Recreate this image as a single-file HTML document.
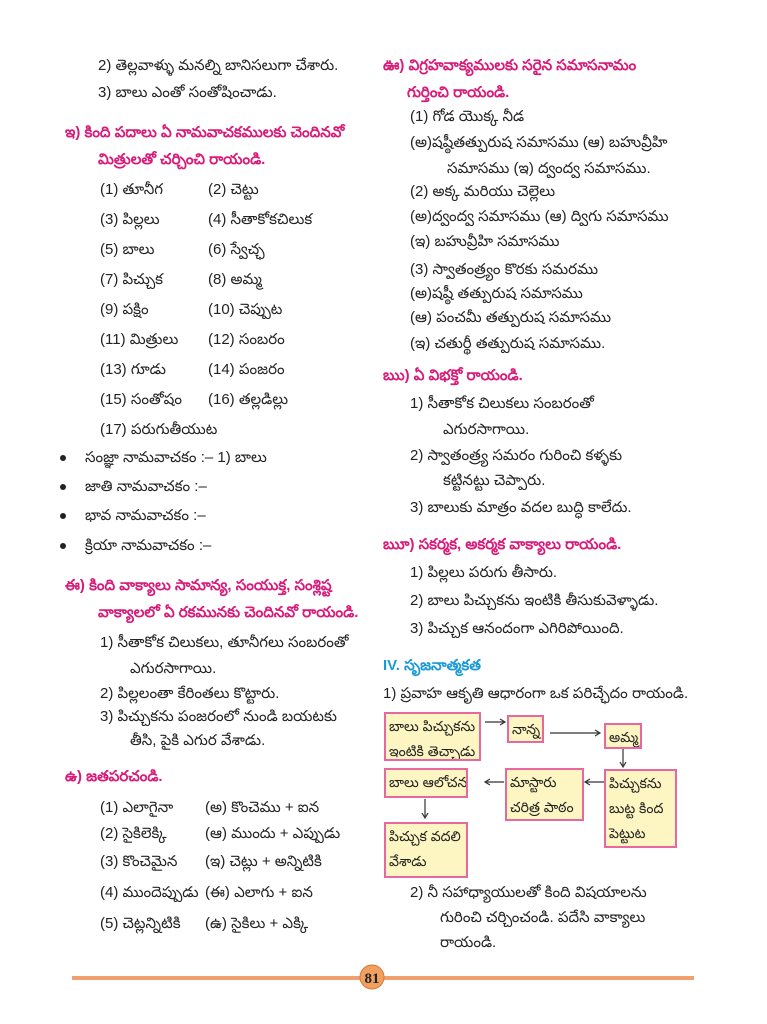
<!DOCTYPE html><html><head><meta charset="utf-8"><style>
body{margin:0;width:767px;height:1024px;background:#fff;position:relative;font-family:"Liberation Sans","Noto Sans CJK JP",sans-serif;font-size:15px;color:#222;overflow:hidden}
.t{position:absolute;white-space:nowrap;line-height:20px}
.p{color:#d81b7a;font-weight:bold}
.b{color:#1a9ad6;font-weight:bold}
.box{position:absolute;background:#fdf5c2;border:2px solid #e8679f;box-sizing:border-box;font-size:14px;line-height:25px;padding:0 3px;white-space:nowrap;overflow:hidden}
.dot{position:absolute;width:6px;height:6px;border-radius:50%;background:#222}
</style></head><body>
<div class="t" style="left:98px;top:56px">2) తెల్లవాళ్ళు మనల్ని బానిసలుగా చేశారు.</div>
<div class="t" style="left:98px;top:83px">3) బాలు ఎంతో సంతోషించాడు.</div>
<div class="t p" style="left:65px;top:123px">ఇ) కింది పదాలు ఏ నామవాచకములకు చెందినవో</div>
<div class="t p" style="left:98px;top:150px">మిత్రులతో చర్చించి రాయండి.</div>
<div class="t" style="left:100px;top:180px">(1) తూనీగ</div><div class="t" style="left:208px;top:180px">(2) చెట్టు</div>
<div class="t" style="left:100px;top:210px">(3) పిల్లలు</div><div class="t" style="left:208px;top:210px">(4) సీతాకోకచిలుక</div>
<div class="t" style="left:100px;top:240px">(5) బాలు</div><div class="t" style="left:208px;top:240px">(6) స్వేచ్ఛ</div>
<div class="t" style="left:100px;top:270px">(7) పిచ్చుక</div><div class="t" style="left:208px;top:270px">(8) అమ్మ</div>
<div class="t" style="left:100px;top:300px">(9) పక్షిం</div><div class="t" style="left:208px;top:300px">(10) చెప్పుట</div>
<div class="t" style="left:100px;top:330px">(11) మిత్రులు</div><div class="t" style="left:208px;top:330px">(12) సంబరం</div>
<div class="t" style="left:100px;top:360px">(13) గూడు</div><div class="t" style="left:208px;top:360px">(14) పంజరం</div>
<div class="t" style="left:100px;top:390px">(15) సంతోషం</div><div class="t" style="left:208px;top:390px">(16) తల్లడిల్లు</div>
<div class="t" style="left:100px;top:420px">(17) పరుగుతీయుట</div>
<div class="dot" style="left:60px;top:455px"></div><div class="t" style="left:85px;top:448px">సంజ్ఞా నామవాచకం :– 1) బాలు</div>
<div class="dot" style="left:60px;top:484px"></div><div class="t" style="left:85px;top:477px">జాతి నామవాచకం :–</div>
<div class="dot" style="left:60px;top:513px"></div><div class="t" style="left:85px;top:506px">భావ నామవాచకం :–</div>
<div class="dot" style="left:60px;top:543px"></div><div class="t" style="left:85px;top:536px">క్రియా నామవాచకం :–</div>
<div class="t p" style="left:65px;top:576px">ఈ) కింది వాక్యాలు సామాన్య, సంయుక్త, సంశ్లిష్ట</div>
<div class="t p" style="left:98px;top:603px">వాక్యాలలో ఏ రకమునకు చెందినవో రాయండి.</div>
<div class="t" style="left:100px;top:633px">1) సీతాకోక చిలుకలు, తూనీగలు సంబరంతో</div>
<div class="t" style="left:130px;top:659px">ఎగురసాగాయి.</div>
<div class="t" style="left:100px;top:684px">2) పిల్లలంతా కేరింతలు కొట్టారు.</div>
<div class="t" style="left:100px;top:707px">3) పిచ్చుకను పంజరంలో నుండి బయటకు</div>
<div class="t" style="left:130px;top:731px">తీసి, పైకి ఎగుర వేశాడు.</div>
<div class="t p" style="left:65px;top:767px">ఉ) జతపరచండి.</div>
<div class="t" style="left:100px;top:798px">(1) ఎలాగైనా</div><div class="t" style="left:205px;top:798px">(అ) కొంచెము + ఐన</div>
<div class="t" style="left:100px;top:824px">(2) సైకిలెక్కి</div><div class="t" style="left:205px;top:824px">(ఆ) ముందు + ఎప్పుడు</div>
<div class="t" style="left:100px;top:852px">(3) కొంచెమైన</div><div class="t" style="left:205px;top:852px">(ఇ) చెట్లు + అన్నిటికి</div>
<div class="t" style="left:100px;top:883px">(4) ముందెప్పుడు</div><div class="t" style="left:205px;top:883px">(ఈ) ఎలాగు + ఐన</div>
<div class="t" style="left:100px;top:914px">(5) చెట్లన్నిటికి</div><div class="t" style="left:205px;top:914px">(ఉ) సైకిలు + ఎక్కి</div>

<div class="t p" style="left:383px;top:56px">ఊ) విగ్రహవాక్యములకు సరైన సమాసనామం</div>
<div class="t p" style="left:407px;top:83px">గుర్తించి రాయండి.</div>
<div class="t" style="left:410px;top:107px">(1) గోడ యొక్క నీడ</div>
<div class="t" style="left:410px;top:133px">(అ)షష్ఠీతత్పురుష సమాసము (ఆ) బహువ్రీహి</div>
<div class="t" style="left:447px;top:159px">సమాసము (ఇ) ద్వంద్వ సమాసము.</div>
<div class="t" style="left:410px;top:182px">(2) అక్క మరియు చెల్లెలు</div>
<div class="t" style="left:410px;top:207px">(అ)ద్వంద్వ సమాసము (ఆ) ద్విగు సమాసము</div>
<div class="t" style="left:410px;top:232px">(ఇ) బహువ్రీహి సమాసము</div>
<div class="t" style="left:410px;top:260px">(3) స్వాతంత్ర్యం కొరకు సమరము</div>
<div class="t" style="left:410px;top:284px">(అ)షష్ఠీ తత్పురుష సమాసము</div>
<div class="t" style="left:410px;top:308px">(ఆ) పంచమీ తత్పురుష సమాసము</div>
<div class="t" style="left:410px;top:334px">(ఇ) చతుర్థీ తత్పురుష సమాసము.</div>
<div class="t p" style="left:383px;top:366px">ఋ) ఏ విభక్తో రాయండి.</div>
<div class="t" style="left:410px;top:394px">1) సీతాకోక చిలుకలు సంబరంతో</div>
<div class="t" style="left:443px;top:420px">ఎగురసాగాయి.</div>
<div class="t" style="left:410px;top:446px">2) స్వాతంత్ర్య సమరం గురించి కళ్ళకు</div>
<div class="t" style="left:443px;top:471px">కట్టినట్టు చెప్పారు.</div>
<div class="t" style="left:410px;top:498px">3) బాలుకు మాత్రం వదల బుద్ధి కాలేదు.</div>
<div class="t p" style="left:383px;top:535px">ౠ) సకర్మక, అకర్మక వాక్యాలు రాయండి.</div>
<div class="t" style="left:410px;top:563px">1) పిల్లలు పరుగు తీసారు.</div>
<div class="t" style="left:410px;top:591px">2) బాలు పిచ్చుకను ఇంటికి తీసుకువెళ్ళాడు.</div>
<div class="t" style="left:410px;top:619px">3) పిచ్చుక ఆనందంగా ఎగిరిపోయింది.</div>
<div class="t b" style="left:383px;top:656px">IV. సృజనాత్మకత</div>
<div class="t" style="left:383px;top:684px">1) ప్రవాహ ఆకృతి ఆధారంగా ఒక పరిచ్ఛేదం రాయండి.</div>

<div class="box" style="left:384px;top:712px;width:97px;height:49px">బాలు పిచ్చుకను<br>ఇంటికి తెచ్చాడు</div>
<div class="box" style="left:507px;top:715px;width:37px;height:28px">నాన్న</div>
<div class="box" style="left:604px;top:723px;width:38px;height:26px">అమ్మ</div>
<div class="box" style="left:604px;top:769px;width:73px;height:79px">పిచ్చుకను<br>బుట్ట కింద<br>పెట్టుట</div>
<div class="box" style="left:505px;top:768px;width:79px;height:53px">మాస్టారు<br>చరిత్ర పాఠం</div>
<div class="box" style="left:384px;top:768px;width:84px;height:30px">బాలు ఆలోచన</div>
<div class="box" style="left:384px;top:822px;width:84px;height:56px">పిచ్చుక వదలి<br>వేశాడు</div>
<svg style="position:absolute;left:0;top:0" width="767" height="1024"><g stroke="#333" stroke-width="1.2" fill="none">
<path d="M485 722H505M500 719L505 722L500 725"/>
<path d="M550 733H600M595 730L600 733L595 736"/>
<path d="M623 749V767M620 762L623 767L626 762"/>
<path d="M604 782H585M590 779L585 782L590 785"/>
<path d="M504 782H485M490 779L485 782L490 785"/>
<path d="M425 799V818M422 813L425 818L428 813"/>
</g>
<line x1="72" y1="978" x2="694" y2="978" stroke="#f0a070" stroke-width="4"/>
<circle cx="372" cy="977" r="12" fill="#f2a060" stroke="#d07a3a"/>
<text x="372" y="983" text-anchor="middle" font-family="Liberation Serif" font-size="15" font-weight="bold" fill="#222">81</text>
</svg>
<div class="t" style="left:410px;top:883px">2) నీ సహాధ్యాయులతో కింది విషయాలను</div>
<div class="t" style="left:440px;top:908px">గురించి చర్చించండి. పదేసి వాక్యాలు</div>
<div class="t" style="left:440px;top:933px">రాయండి.</div>
</body></html>
